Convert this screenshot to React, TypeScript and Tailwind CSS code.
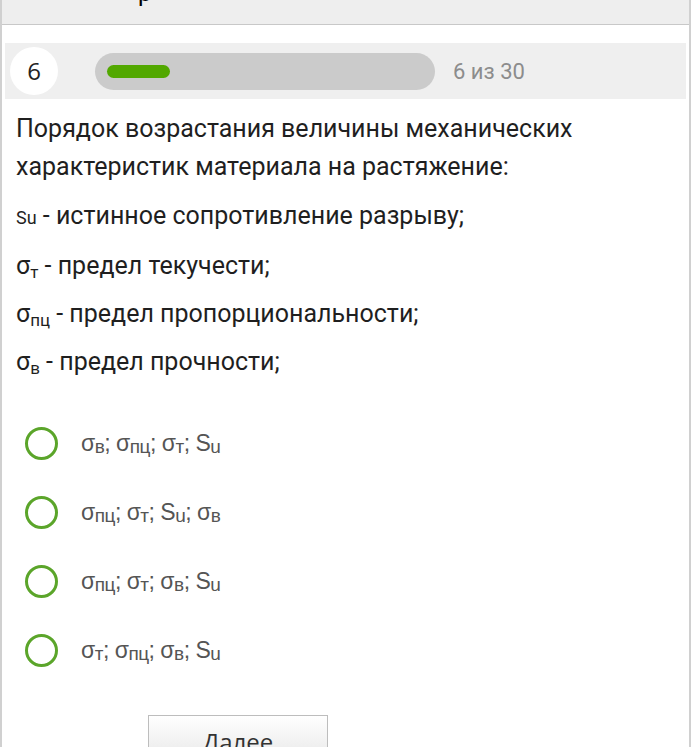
import React from 'react'

const options: { parts: [string, string][] }[] = [
  { parts: [['σ', 'в'], ['σ', 'пц'], ['σ', 'т'], ['S', 'u']] },
  { parts: [['σ', 'пц'], ['σ', 'т'], ['S', 'u'], ['σ', 'в']] },
  { parts: [['σ', 'пц'], ['σ', 'т'], ['σ', 'в'], ['S', 'u']] },
  { parts: [['σ', 'т'], ['σ', 'пц'], ['σ', 'в'], ['S', 'u']] },
]

function Formula({ parts }: { parts: [string, string][] }) {
  return (
    <span>
      {parts.map(([base, sub], i) => (
        <span key={i}>
          {base}
          <sub className="text-[19px] relative top-[2px]">{sub}</sub>
          {i < parts.length - 1 ? '; ' : ''}
        </span>
      ))}
    </span>
  )
}

export default function App() {
  return (
    <div className="h-[747px] w-full overflow-hidden bg-white border-l-2 border-r-2 border-[#d0d0d0] font-['Roboto',sans-serif]">
      {/* header, mostly scrolled away */}
      <div className="h-[25px] bg-[#eeeeee] border-b border-[#c8c8c8] overflow-hidden">
        <div className="ml-[136px] -mt-[19px] text-[24px] leading-[24px] text-black">р</div>
      </div>

      {/* progress strip */}
      <div className="mt-[18px] mx-[3px] h-[56px] bg-[#efefef] flex items-center">
        <div className="ml-[5px] w-12 h-12 rounded-full bg-white flex items-center justify-center text-[24px] text-[#222] font-['Open_Sans',sans-serif]">
          6
        </div>
        <div className="ml-[37px] w-[340px] h-[37px] rounded-full bg-[#cbcbcb] flex items-center pl-3">
          <div className="w-[63px] h-[13px] rounded-full bg-[#52a800]" />
        </div>
        <div className="ml-[18px] text-[22px] text-[#8c8c8c]">6 из 30</div>
      </div>

      {/* question */}
      <div className="mt-[11px] px-[14px] text-[25px] text-[#1f1f1f]">
        <p className="leading-[38px]">
          Порядок возрастания величины механических характеристик материала на растяжение:
        </p>
        <div className="mt-[6px] flex flex-col">
          <p className="leading-[48px]">
            <span className="text-[18px]">Su</span> - истинное сопротивление разрыву;
          </p>
          <p className="leading-[48px]">
            σ<sub className="text-[17px]">т</sub> - предел текучести;
          </p>
          <p className="leading-[48px]">
            σ<sub className="text-[17px]">пц</sub> - предел пропорциональности;
          </p>
          <p className="leading-[48px]">
            σ<sub className="text-[17px]">в</sub> - предел прочности;
          </p>
        </div>
      </div>

      {/* answers */}
      <div className="mt-[23px] flex flex-col">
        {options.map((o, i) => (
          <div key={i} className="h-[69px] flex items-center">
            <div className="ml-[23px] w-[33px] h-[33px] rounded-full border-[3px] border-[#5ba52a]" />
            <div className="ml-[23px] text-[23px] text-[#555] font-['Liberation_Sans',sans-serif] tracking-[-0.5px]">
              <Formula parts={o.parts} />
            </div>
          </div>
        ))}
      </div>

      {/* next button */}
      <div className="mt-[30px] ml-[146px] w-[180px] h-[50px] border border-[#bdbdbd] bg-gradient-to-b from-white to-[#e6e6e6] flex justify-center pt-[10px]">
        <span className="text-[24px] text-[#333] font-['Open_Sans',sans-serif] leading-[32px]">Далее</span>
      </div>
    </div>
  )
}
